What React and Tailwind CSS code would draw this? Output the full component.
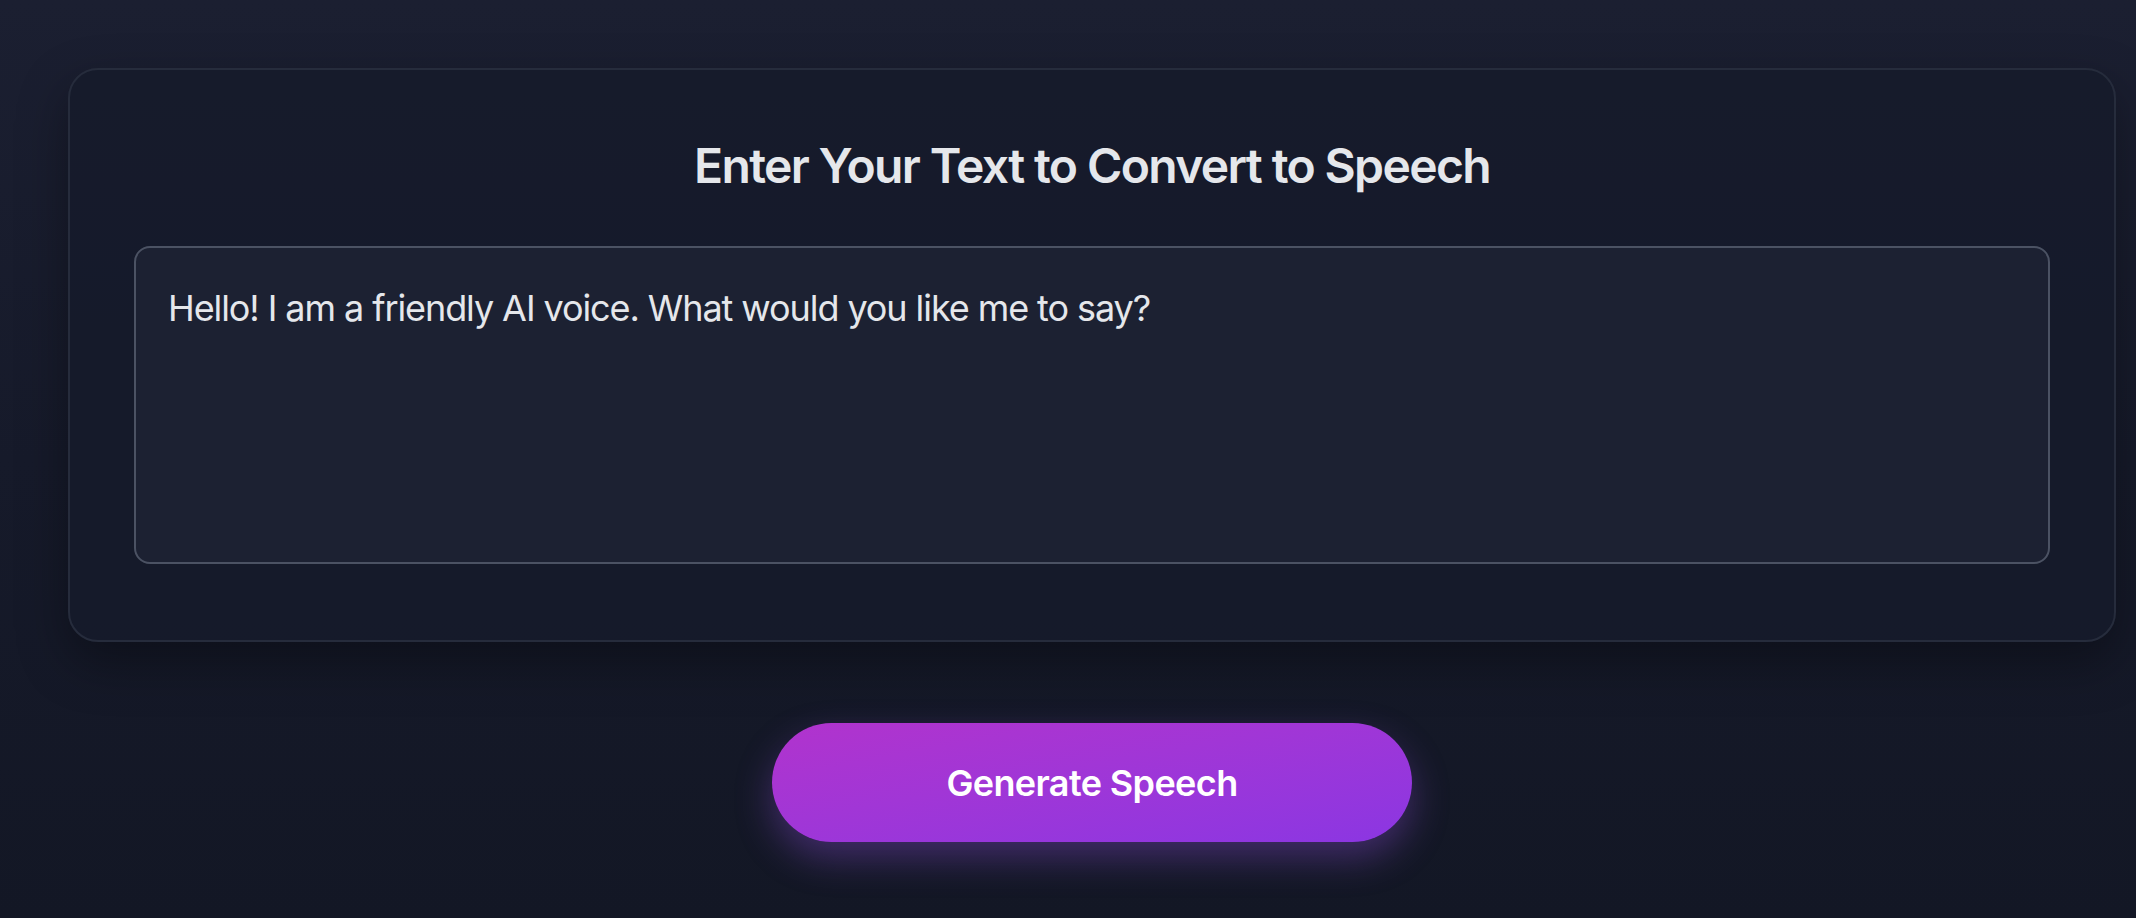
import React from "react";

export default function App() {
  return (
    <div
      className="min-h-screen w-full bg-gradient-to-b from-[#1b1f31] via-[#161a2a] to-[#131725] pt-[68px] pl-[68px] pb-[60px]"
      style={{ fontFamily: "Inter, 'Noto Sans', sans-serif" }}
    >
      <div className="w-[2048px] rounded-[30px] border-2 border-[#262c3c] bg-[#151a2a]/80 px-[64px] pt-[64px] pb-[76px] shadow-[0_20px_50px_rgba(0,0,0,0.35)]">
        <h2 className="mb-[48px] text-center text-[48px] leading-[64px] font-semibold tracking-[-0.034em] text-[#e5e7eb]">
          Enter Your Text to Convert to Speech
        </h2>
        <textarea
          className="block h-[318px] w-full resize-none rounded-[16px] border-2 border-[#4b5263] bg-[#1c2132] px-[32px] py-[32px] text-[36px] leading-[56px] tracking-[-0.03em] text-[#e5e7eb] outline-none"
          style={{ fontFamily: "Inter, 'Noto Sans', sans-serif" }}
          defaultValue="Hello! I am a friendly AI voice. What would you like me to say?"
        />
      </div>
      <div className="mt-[81px] flex w-[2048px] justify-center">
        <button className="h-[119px] w-[640px] rounded-full bg-gradient-to-br from-[#b133cd] to-[#8b36e2] text-[36px] leading-[56px] font-semibold tracking-[-0.017em] text-white shadow-[0_16px_36px_rgba(150,80,230,0.35)]">
          Generate Speech
        </button>
      </div>
    </div>
  );
}
